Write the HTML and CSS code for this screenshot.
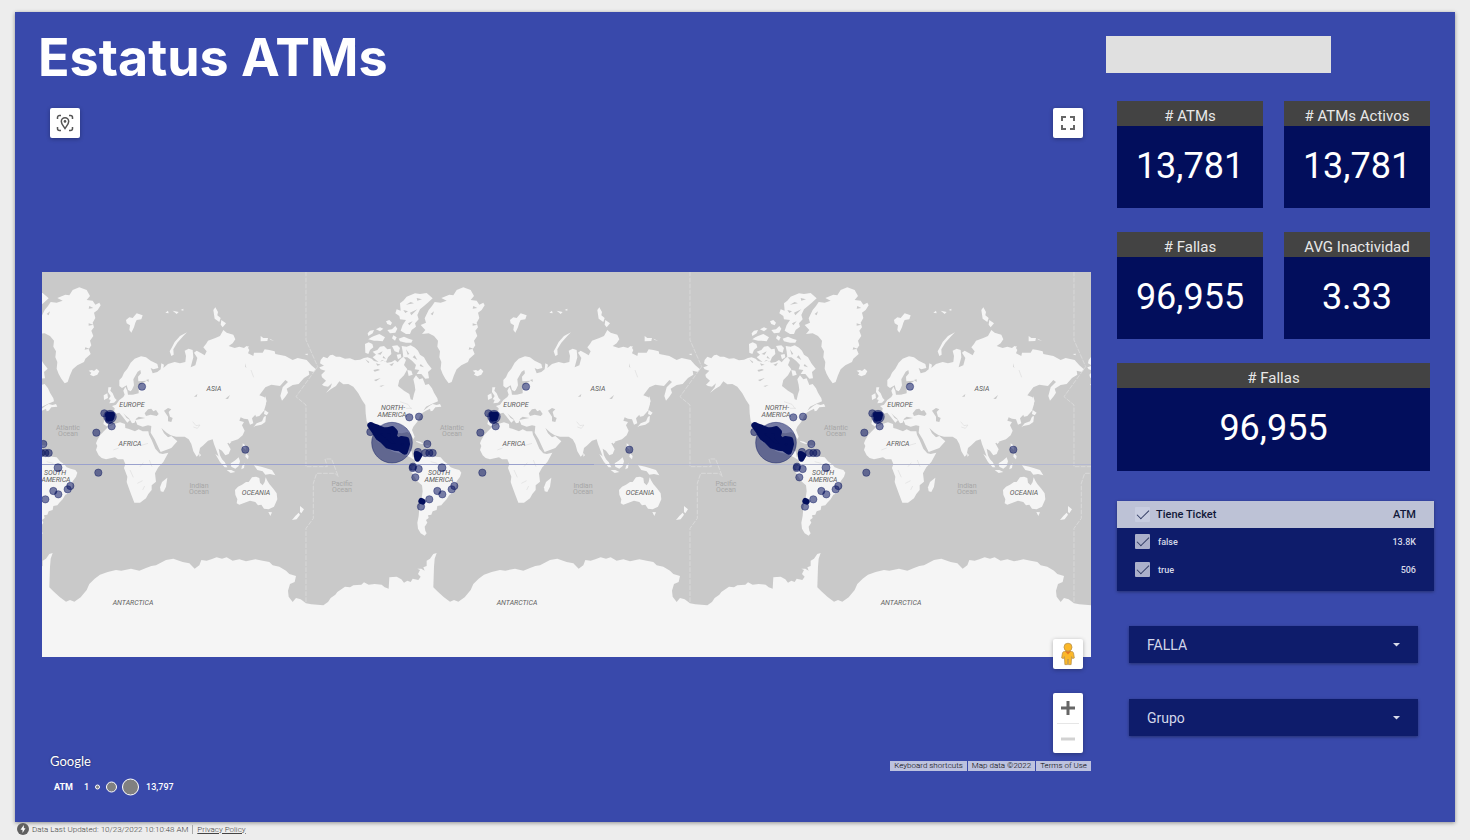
FILE: index.html
```html
<!DOCTYPE html>
<html lang="es">
<head>
<meta charset="utf-8">
<meta name="viewport" content="width=device-width, initial-scale=1">
<title>Estatus ATMs</title>
<link rel="stylesheet" href="styles.css">
</head>
<body>
<main class="report">
  <header class="report-head">
    <h1>Estatus ATMs</h1>
    <div class="placeholder"></div>
  </header>

  <div class="report-body">
    <section class="map-column">
      <div class="map">
        <svg class="world" viewBox="42 272 1049 385" role="img" aria-label="ATM map">
          <defs>
            <g id="land">
              <g class="land">
                <path d="M62 270L70 260L82 265L90 256L98 254L108 260L120 260L135 266L150 265L165 271L180 269L192 264L203 262L215 266L222 273L235 276L250 272L262 278L275 276L285 270L293 277L302 266L310 260L318 270L312 285L322 298L312 316L298 330L294 348L312 362L328 372L332 388L338 390L342 372L346 360L344 345L340 328L348 316L358 328L368 325L376 345L386 342L396 355L402 368L412 385L414 394L395 402L378 410L370 422L388 408L398 402L410 405L420 402L424 410L406 412L398 422L392 424L390 416L378 422L368 428L360 438L352 455L340 470L336 480L344 500L340 508L332 492L322 486L305 490L290 488L278 498L276 520L288 535L302 532L312 520L322 524L318 540L335 544L338 560L350 566L346 572L330 562L308 552L280 545L258 532L244 512L228 490L222 484L232 508L238 520L226 506L214 478L200 454L197 430L196 405L186 390L175 370L160 350L145 342L130 343L118 334L108 348L92 358L78 369L92 352L96 340L84 350L72 348L66 344L78 332L66 322L64 314L76 302L62 298L58 292L72 287L60 280Z"/>
                <path d="M300 100L310 92L320 80L345 70L360 72L380 69L398 85L385 97L372 108L360 118L352 135L356 148L345 160L348 170L335 180L330 192L318 192L302 182L308 165L318 150L300 148L298 138L286 130L290 118L302 122Z"/>
                <path d="M305 228L320 230L332 226L345 233L354 242L360 254L372 262L382 280L395 296L384 306L387 325L376 326L364 312L350 312L358 300L344 298L348 285L336 272L322 262L310 262L308 245Z"/>
                <path d="M218 245L232 240L240 230L252 228L262 238L272 236L274 252L264 262L258 276L246 270L238 278L228 270L218 262L228 254Z"/>
                <path d="M195 222L206 217L217 222L220 232L210 240L205 252L196 248Z"/>
                <path d="M222 198L238 192L255 202L248 214L232 212L222 212L205 208L214 202Z"/>
                <path d="M203 190L210 182L222 180L218 190L205 198Z"/>
                <path d="M228 178L240 172L250 176L240 184Z"/>
                <path d="M258 154L268 150L276 158L272 166L262 162Z"/>
                <path d="M262 180L276 178L286 168L292 176L286 188L270 190Z"/>
                <path d="M280 196L290 202L285 212L276 205Z"/>
                <path d="M296 206L312 200L326 206L338 210L334 218L318 218L300 214Z"/>
                <path d="M276 228L292 226L300 234L296 248L284 244Z"/>
                <path d="M290 254L302 252L304 262L294 268Z"/>
                <path d="M322 300L334 302L338 314L326 318Z"/>
                <path d="M362 165L378 158L374 145L386 120L396 108L404 96L422 98L440 92L424 84L448 74L460 76L470 60L490 52L512 60L522 78L512 90L530 92L538 104L550 98L554 106L545 120L534 128L538 144L530 158L534 172L526 182L532 198L522 212L526 226L518 238L524 252L508 266L504 276L484 286L470 298L462 316L455 336L446 340L436 326L428 312L422 296L424 276L418 262L420 244L412 230L414 212L402 198L386 190L366 192L376 180Z"/>
                <path d="M518 302L528 300L534 303L542 296L550 304L544 314L532 319L522 314L526 308Z"/>
                <path d="M347 512L360 515L372 522L362 521L350 516Z"/>
                <path d="M376 526L392 527L390 532L378 531Z"/>
                <path d="M344 568L358 558L366 552L374 556L396 556L408 560L422 562L432 574L446 584L452 592L464 596L478 600L484 608L480 620L470 634L468 652L462 668L448 674L440 688L430 698L424 706L412 708L410 720L398 724L394 734L384 736L386 744L378 750L382 758L374 770L376 782L380 790L374 797L362 790L354 776L352 758L356 738L358 714L364 690L368 664L366 646L352 634L342 618L334 606L338 590L346 582Z"/>
                <path d="M577 470L562 485L552 496L544 510L540 520L544 528L540 540L548 556L557 564L570 568L597 562L606 568L622 568L628 582L624 594L634 620L632 636L637 650L645 672L655 698L672 698L690 685L697 672L707 660L707 646L720 635L717 610L727 592L742 576L757 548L740 552L730 550L718 536L707 510L699 494L697 484L680 484L668 478L657 484L637 476L628 474L627 462L612 457L597 461Z"/>
                <path d="M754 623L750 650L742 666L734 664L732 652L738 636Z"/>
                <path d="M577 352L586 352L583 362L590 370L596 384L602 390L594 398L580 400L584 390L578 388L584 378L576 366Z"/>
                <path d="M563 376L574 370L576 384L564 390Z"/>
                <g transform="translate(600 0)">
                  <path d="M-34 430L-22 427L-6 428L-4 415L-12 408L0 404L10 390L22 381L26 374L22 362L28 350L34 362L36 374L48 374L58 370L50 358L44 364L36 360L32 346L18 354L10 348L10 330L18 322L24 308L34 296L44 278L56 266L75 259L90 262L104 272L124 282L127 294L112 298L104 294L110 310L124 306L134 298L136 280L144 284L142 294L156 282L176 276L192 280L208 276L210 258L206 242L218 236L230 240L232 262L224 292L238 286L244 264L234 248L242 242L256 250L266 256L272 244L262 232L270 222L276 212L298 204L312 198L322 180L332 188L352 194L358 208L350 220L338 228L356 234L370 230L384 234L392 228L400 240L396 250L412 258L414 248L440 248L446 238L460 240L476 244L478 252L508 258L530 270L545 264L572 270L586 286L600 298L594 306L578 302L580 314L564 324L548 342L530 345L512 356L516 368L508 380L498 392L493 378L500 352L516 336L508 330L492 348L466 344L448 352L430 376L446 382L450 402L444 422L430 438L420 440L418 434L408 445L412 460L402 464L396 448L384 446L374 442L370 452L384 456L378 466L386 482L380 496L366 508L348 514L334 520L344 538L338 552L328 556L318 542L308 536L312 556L322 576L328 582L312 572L304 548L294 522L290 508L276 512L262 526L252 534L248 554L242 560L232 544L226 522L218 508L206 500L180 500L164 496L152 488L136 474L144 490L156 502L166 498L184 514L166 534L134 546L128 534L116 508L104 488L106 468L96 466L80 470L64 464L58 450L76 446L88 444L68 440L60 446L56 458L48 460L40 446L28 436L22 430L32 444L42 450L34 458L20 440L10 428L-6 432L-10 446L-14 464L-26 470L-38 462L-34 446Z"/>
                  <path d="M30 150L40 142L50 144L62 130L80 136L76 148L62 150L58 158L54 172L46 188L40 180L42 166L32 160Z"/>
                  <path d="M213 187L192 198L176 216L168 232L161 244L166 258L173 254L172 238L184 218L202 198Z"/>
                  <path d="M148 128L156 122L158 130ZM170 122L188 126L182 132ZM194 120L202 116L202 122Z"/>
                  <path d="M292 120L298 112L306 126L304 136L314 144L310 156L296 146ZM316 150L330 160L320 172L314 164Z"/>
                  <path d="M434 198L442 204L456 204L454 213L434 214ZM460 206L474 212L464 210Z"/>
                  <path d="M566 252L576 251L574 256ZM386 232L398 228L396 236Z"/>
                  <path d="M448 378L452 394L448 404L446 390ZM446 420L458 428L452 436L444 432ZM450 438L448 456L436 464L418 468L412 472L422 460L438 454L444 440Z"/>
                  <path d="M250 548L255 556L250 560ZM298 552L312 562L326 576L334 592L326 592L312 576ZM332 600L346 600L358 606L344 609ZM344 580L356 572L368 562L372 574L368 588L358 596L346 590ZM378 588L386 580L384 594L376 598Z"/>
                  <path d="M380 520L388 526L390 540L380 532ZM390 550L398 558L396 568L388 560Z"/>
                  <path d="M414 586L426 588L436 590L456 596L468 600L478 616L462 612L448 614L440 604L424 600ZM335 514L346 516L340 522Z"/>
                  <path d="M357 660L366 650L378 644L390 636L398 636L408 622L420 620L430 624L432 638L440 646L446 636L449 622L454 632L460 642L472 656L482 670L484 688L474 710L458 718L444 716L436 704L426 706L418 696L402 692L386 698L370 704L362 700L364 688L358 674Z"/>
                  <path d="M457 726L468 727L463 738ZM528 750L538 738L548 728L552 734L542 748ZM552 708L564 718L556 730L552 726Z"/>
                </g>
                <path d="M18 1000L34 1003L70 1006L84 996L92 984L106 974L112 966L135 950L150 952L160 946L184 944L192 937L206 944L224 942L245 944L254 952L266 956L268 922L290 920L304 928L312 938L322 932L332 936L338 926L355 930L362 920L354 912L360 900L352 896L364 896L374 902L370 892L380 888L380 872L390 866L400 852L410 849L404 866L402 890L400 952L412 964L430 980L450 995L462 990L475 995L494 982L512 960L520 942L536 926L552 914L575 906L600 900L616 902L645 896L670 902L690 894L706 888L720 886L750 870L772 866L800 876L820 880L836 896L850 886L856 870L872 872L886 868L902 862L918 866L932 862L950 872L970 868L990 874L1018 868L1040 872L1060 876L1070 886L1090 890L1110 902L1120 912L1140 918L1136 936L1122 942L1116 962L1118 980L1130 996L1140 984L1154 988L1170 1000V1166H18Z"/>
              </g>
              <g class="water">
                <path d="M665 305L673 300L675 310L666 320L667 334L692 332L680 340L668 346L668 370L650 374L646 364L654 346L652 328Z"/>
                <path d="M686 430L696 418L706 416L712 424L720 420L728 432L722 438L704 434L690 438Z"/>
                <path d="M744 422L756 414L766 418L758 426L762 440L770 444L766 456L756 454L756 440Z"/>
                <path d="M220 300l14 -3l6 3l-16 5zM222 330l20-6l-14 10zM238 348l16-3l-10 5zM690 330l8-2v8zM806 500l14 8zM834 380l10-8l-2 8zM928 386l14-11l-6 12zM988 280l3 14l-3-4z"/>
                <path d="M318 104l14-8l10 4l-16 3zM330 128l22-10l-18 18zM310 120l14 4l-8 5zM324 160l14-6l-10 12zM350 84l16 4l-14 4zM318 238l10 14l-5 2zM344 256l8 14l-14-8zM362 282l10 10l-13-4zM232 252l16-8l-6 10zM250 258l8 8l-10-2zM196 268l12 8l-3 3zM228 280l14 4l-10 3zM268 284l14-6l-6 10zM392 132l10-8l-4 12zM520 108l12 6l-14 2zM518 160l14 4l-14 3zM508 232l12 4l-14 3z"/>
              </g>
              <path class="fissure" d="M642 600l10 22M672 590l10-12M700 570l8 20M664 640l16-8M680 660l6-12M696 520l-20 6M592 540l16-6M830 455l10 12l12-2l-8 10l-12-4M1005 300l8 22M300 395l24 8l10 14M318 415h18M405 600l14 16M392 575l20 5"/>
              <path class="dateline" d="M18 5V210L53 290L-12 380L18 405V590H82L75 567H95L115 620L105 610H50L40 640V745L18 775V1000"/>
            </g>
            <g id="sites">
              <circle class="site" cx="276" cy="518" r="61"/>
              <path class="dense" d="M212 466L220 470L232 474L250 482L262 482L276 478L284 486L280 500L296 516L304 508L318 510L320 522L314 544L300 534L284 532L264 526L248 510L236 502L224 482Z"/>
              <g class="site">
                <circle cx="211" cy="486" r="11"/><circle cx="328" cy="442" r="11"/><circle cx="357" cy="440" r="11"/>
                <circle cx="382" cy="522" r="11"/><circle cx="398" cy="549" r="11"/><circle cx="388" cy="549" r="11"/>
                <circle cx="376" cy="549" r="11"/><circle cx="354" cy="546" r="11"/><circle cx="339" cy="590" r="11"/><circle cx="338" cy="594" r="11"/>
                <circle cx="356" cy="597" r="11"/><circle cx="346" cy="622" r="11"/><circle cx="426" cy="593" r="12"/>
                <circle cx="547" cy="608" r="11"/><circle cx="463" cy="648" r="11"/><circle cx="455" cy="658" r="11"/>
                <circle cx="412" cy="663" r="11"/><circle cx="427" cy="673" r="11"/><circle cx="388" cy="688" r="11"/>
                <circle cx="363" cy="710" r="11"/><circle cx="565" cy="430" r="11"/><circle cx="587" cy="469" r="11"/>
                <circle cx="541" cy="488" r="11"/><circle cx="678" cy="350" r="11"/><circle cx="988" cy="539" r="11"/>
                <circle cx="582" cy="440" r="19"/><circle cx="579" cy="450" r="11"/>
              </g>
              <path class="dense small" d="M350 552L358 556L352 566ZM364 693L368 695ZM576 434L588 434L586 444L578 446Z"/>
            </g>
          </defs>
          <rect class="ocean" x="42" y="272" width="1049" height="385"/>
          <g transform="translate(300 270) scale(.33333)">
            <use href="#land" x="-1152"/><use href="#land"/><use href="#land" x="1152"/><use href="#land" x="2304"/>
          </g>
          <path class="equator" d="M42 464.500H594"/>
          <path class="equator faint" d="M594 464.500H1091"/>
          <g class="labels">
            <g transform="translate(-384 0)">
              <text x="598" y="391">ASIA</text><text x="516" y="407">EUROPE</text><text x="514" y="446">AFRICA</text>
              <text x="439" y="475">SOUTH</text><text x="440" y="482">AMERICA</text><text x="640" y="495">OCEANIA</text><text x="517" y="605">ANTARCTICA</text>
              <text class="sea" x="452" y="430">Atlantic</text><text class="sea" x="452" y="436">Ocean</text>
              <text class="sea" x="583" y="488">Indian</text><text class="sea" x="583" y="494">Ocean</text>
            </g>
            <g>
              <text x="393" y="410">NORTH-</text><text x="392" y="417">AMERICA</text>
              <text x="598" y="391">ASIA</text><text x="516" y="407">EUROPE</text><text x="514" y="446">AFRICA</text>
              <text x="439" y="475">SOUTH</text><text x="439" y="482">AMERICA</text><text x="640" y="495">OCEANIA</text><text x="517" y="605">ANTARCTICA</text>
              <text class="sea" x="452" y="430">Atlantic</text><text class="sea" x="452" y="436">Ocean</text>
              <text class="sea" x="342" y="486">Pacific</text><text class="sea" x="342" y="492">Ocean</text>
              <text class="sea" x="583" y="488">Indian</text><text class="sea" x="583" y="494">Ocean</text>
            </g>
            <g transform="translate(384 0)">
              <text x="393" y="410">NORTH-</text><text x="392" y="417">AMERICA</text>
              <text x="598" y="391">ASIA</text><text x="516" y="407">EUROPE</text><text x="514" y="446">AFRICA</text>
              <text x="439" y="475">SOUTH</text><text x="439" y="482">AMERICA</text><text x="640" y="495">OCEANIA</text><text x="517" y="605">ANTARCTICA</text>
              <text class="sea" x="452" y="430">Atlantic</text><text class="sea" x="452" y="436">Ocean</text>
              <text class="sea" x="342" y="486">Pacific</text><text class="sea" x="342" y="492">Ocean</text>
              <text class="sea" x="583" y="488">Indian</text><text class="sea" x="583" y="494">Ocean</text>
            </g>
          </g>
          <g transform="translate(300 270) scale(.33333)">
            <use href="#sites" x="-1152"/><use href="#sites"/><use href="#sites" x="1152"/>
          </g>
        </svg>

        <button class="map-btn recenter" type="button" aria-label="Recenter map">
          <svg width="18" height="18" viewBox="0 0 18 18" fill="none" stroke="#555" stroke-width="1.500">
            <path d="M1.500 5V3.500a2 2 0 0 1 2-2H5M13 1.500h1.500a2 2 0 0 1 2 2V5M16.500 13v1.500a2 2 0 0 1-2 2H13M5 16.500H3.500a2 2 0 0 1-2-2V13"/>
            <path d="M9 14.500C7 11.500 5.300 9.800 5.300 7.500a3.700 3.700 0 0 1 7.400 0C12.700 9.800 11 11.500 9 14.500z"/><circle cx="9" cy="7.400" r="1.300" fill="#555" stroke="none"/>
          </svg>
        </button>
        <button class="map-btn fullscreen" type="button" aria-label="Toggle fullscreen view">
          <svg width="14" height="14" viewBox="0 0 14 14" fill="none" stroke="#666" stroke-width="2"><path d="M0 1H5M1 0V5M9 1H14M13 0V5M0 13H5M1 14V9M9 13H14M13 14V9"/></svg>
        </button>
        <div class="map-tools">
          <button class="map-btn" type="button" aria-label="Street View">
            <svg width="14" height="24" viewBox="0 0 14 24">
              <path d="M3.500 9.500h7c1.500 0 2 1 2.200 2.500l.6 4-1.800.6-.9-2-.5 8H7.400L7 17l-.5 5.600H3.900l-.5-8-.9 2-1.800-.6.600-4C1.500 10.500 2 9.500 3.500 9.500z" fill="#fbb829" stroke="#b9924a" stroke-width=".8"/>
              <path d="M4 9.200h6L7 12.500z" fill="#e67621"/><circle cx="7" cy="5.200" r="4" fill="#fbb829" stroke="#b9924a" stroke-width=".8"/>
            </svg>
          </button>
          <div class="zoom">
            <button type="button" aria-label="Zoom in"><svg width="14" height="14" viewBox="0 0 14 14" stroke="#666" stroke-width="3"><path d="M0 7H14M7 0V14"/></svg></button>
            <button type="button" aria-label="Zoom out" disabled><svg width="14" height="14" viewBox="0 0 14 14" stroke="#d2d2d2" stroke-width="3"><path d="M0 7H14"/></svg></button>
          </div>
        </div>
        <span class="google">Google</span>
        <div class="attribution">
          <button type="button">Keyboard shortcuts</button><span>Map data ©2022</span><a href="#terms">Terms of Use</a>
        </div>
      </div>
      <div class="legend">
        <b>ATM</b><span>1</span>
        <svg width="44" height="18" viewBox="0 0 44 18" fill="#808080" stroke="#fff" aria-hidden="true"><circle cx="2.500" cy="9" r="2"/><circle cx="16.500" cy="9" r="5"/><circle cx="35.500" cy="9" r="8"/></svg>
        <span>13,797</span>
      </div>
    </section>

    <aside class="side">
      <div class="cards">
        <section class="card"><h2>#&nbsp;ATMs</h2><p>13,781</p></section>
        <section class="card"><h2>#&nbsp;ATMs Activos</h2><p>13,781</p></section>
        <section class="card"><h2># Fallas</h2><p>96,955</p></section>
        <section class="card"><h2>AVG Inactividad</h2><p>3.33</p></section>
        <section class="card wide"><h2># Fallas</h2><p>96,955</p></section>
      </div>

      <div class="ticket-box">
        <table class="tickets">
          <thead><tr><th class="tick"><input id="t-all" type="checkbox" checked></th><th><label for="t-all">Tiene Ticket</label></th><th class="num">ATM</th></tr></thead>
          <tbody>
            <tr><td class="tick"><input id="t-false" type="checkbox" checked></td><td><label for="t-false">false</label></td><td class="num">13.8K</td></tr>
            <tr><td class="tick"><input id="t-true" type="checkbox" checked></td><td><label for="t-true">true</label></td><td class="num">506</td></tr>
          </tbody>
        </table>
      </div>

      <div class="filters">
        <div class="filter">
          <select aria-label="FALLA"><option>FALLA</option></select>
          <svg width="7" height="4" viewBox="0 0 7 4" aria-hidden="true"><path d="M0 0H7L3.500 3.500z" fill="#d8dbea"/></svg>
        </div>
        <div class="filter">
          <select aria-label="Grupo"><option>Grupo</option></select>
          <svg width="7" height="4" viewBox="0 0 7 4" aria-hidden="true"><path d="M0 0H7L3.500 3.500z" fill="#d8dbea"/></svg>
        </div>
      </div>
    </aside>
  </div>
</main>
<footer class="foot">
  <svg width="12" height="12" viewBox="0 0 12 12" aria-hidden="true"><circle cx="6" cy="6" r="6" fill="#606060"/><path d="M6.800 2L3.500 6.700H5.500V10L8.500 5.300H6.800z" fill="#fff"/></svg>
  <span>Data Last Updated: 10/23/2022 10:10:48 AM</span>
  <a href="#privacy">Privacy Policy</a>
</footer>
</body>
</html>
```

FILE: styles.css
```css
* {
  box-sizing: border-box;
}

body {
  margin: 0;
  padding: 12px 15px 0;
  background: #ededed;
  font-family: Roboto, "Liberation Sans", sans-serif;
}

button,
select {
  font: inherit;
  border: 0;
  padding: 0;
  cursor: pointer;
}

h1,
h2,
p {
  margin: 0;
  font-weight: 400;
}

.report {
  padding: 0 21px 23px 27px;
  background: #3949ab;
  box-shadow: 0 1px 4px rgba(0, 0, 0, .4);
}

.report-head {
  display: flex;
  justify-content: space-between;
  align-items: flex-start;
  height: 86px;
  padding: 14px 103px 0 0;
}

.report-head h1 {
  margin-left: -4px;
  color: #fff;
  font-family: Inter, "Liberation Sans", sans-serif;
  font-size: 52px;
  font-weight: 700;
  line-height: 64px;
}

.placeholder {
  width: 225px;
  height: 37px;
  margin-top: 10px;
  background: #e0e0e0;
}

.report-body {
  display: grid;
  grid-template-columns: minmax(0, 1fr) 317px;
  gap: 26px;
}

/* Map */

.map {
  position: relative;
  padding: 174px 0 114px;
}

.world {
  display: block;
  width: 100%;
  height: auto;
}

.ocean,
.water {
  fill: #c9c9c9;
}

.land {
  fill: #f5f5f5;
}

.fissure {
  fill: none;
  stroke: #dedede;
  stroke-width: 2;
}

.dateline {
  fill: none;
  stroke: #d9d9d9;
  stroke-width: 3;
  stroke-dasharray: 14 4;
}

.equator {
  stroke: #9aa1cd;
  stroke-width: 1;
}

.equator.faint {
  stroke: #b4b8d0;
}

.labels {
  font-size: 7px;
  font-style: italic;
  text-anchor: middle;
  fill: #5e5e5e;
}

.labels .sea {
  font-style: normal;
  fill: #a6a6a6;
}

.site {
  fill: rgba(2, 14, 92, .52);
  stroke: rgba(2, 14, 92, .6);
  stroke-width: 2;
}

.dense {
  fill: #020e5c;
  stroke: #020e5c;
  stroke-width: 20;
  stroke-linejoin: round;
  stroke-linecap: round;
}

.dense.small {
  stroke-width: 18;
}

.map-btn {
  display: grid;
  place-items: center;
  width: 30px;
  height: 30px;
  background: #fff;
  border-radius: 2px;
  box-shadow: 0 1px 4px rgba(0, 0, 0, .3);
}

.recenter,
.fullscreen {
  position: absolute;
  top: 10px;
  left: 8px;
}

.fullscreen {
  left: auto;
  right: 8px;
}

.map-tools {
  position: absolute;
  right: 8px;
  bottom: 18px;
  display: grid;
  gap: 24px;
}

.zoom {
  width: 30px;
  background: #fff;
  border-radius: 2px;
  box-shadow: 0 1px 4px rgba(0, 0, 0, .3);
}

.zoom button {
  display: grid;
  place-items: center;
  width: 22px;
  height: 30px;
  margin: 0 auto;
  background: none;
}

.zoom button + button {
  border-top: 1px solid #e6e6e6;
}

.google {
  position: absolute;
  left: 8px;
  bottom: 2px;
  color: #fff;
  font-family: Lato, sans-serif;
  font-size: 13px;
  line-height: 16px;
  text-shadow: 0 0 2px rgba(0, 0, 0, .5);
}

.attribution {
  position: absolute;
  right: 0;
  bottom: 0;
  display: flex;
  gap: 1px;
  font-weight: 300;
  font-size: 8px;
  line-height: 10px;
}

.attribution > * {
  padding: 0 4px;
  background: #bdc2df;
  color: #000;
  text-decoration: none;
}

.legend {
  display: flex;
  align-items: center;
  height: 25px;
  margin-top: 3px;
  padding-left: 12px;
  color: #fff;
  font-size: 9px;
  font-weight: 500;
}

.legend b {
  margin-right: 11px;
}

.legend svg {
  margin: 0 7px 0 6px;
}

/* Side column */

.side {
  padding-top: 3px;
}

.cards {
  display: grid;
  grid-template-columns: 1fr 1fr;
  gap: 24px 21px;
  margin-right: 4px;
}

.card {
  background: #020e5c;
  color: #fff;
  text-align: center;
}

.card h2 {
  padding-top: 5px;
  background: #434343;
  color: #e8e8e8;
  font-size: 15px;
  line-height: 20px;
}

.card p {
  padding: 18px 0 20px;
  font-size: 36px;
  line-height: 44px;
}

.wide {
  grid-column: 1 / -1;
  padding-bottom: 1px;
}

.ticket-box {
  margin-top: 30px;
  padding-bottom: 7px;
  background: #0e1c6b;
  box-shadow: 0 1px 3px rgba(0, 0, 0, .35);
}

.tickets {
  width: 100%;
  border-collapse: collapse;
  color: #d6d9e8;
  font-size: 9px;
  font-weight: 500;
  text-align: left;
}

.tickets th {
  height: 27px;
  padding: 0;
  background: #bdc2d6;
  color: #111839;
  font-size: 11px;
  font-weight: 500;
}

.tickets td {
  height: 28px;
  padding: 0 0 1px 2px;
}

.tickets .tick {
  width: 39px;
  padding: 0 6px 1px 18px;
}

.tickets .num {
  padding-right: 18px;
  text-align: right;
}

.tick input {
  appearance: none;
  display: grid;
  place-items: center;
  width: 15px;
  height: 15px;
  margin: 0;
  border-radius: 1px;
  background: #abb0ca;
}

.tick input::after {
  content: "";
  width: 11px;
  height: 5px;
  margin-bottom: 3px;
  border: solid #303a62;
  border-width: 0 0 1px 1px;
  transform: rotate(-45deg);
}

th.tick input {
  background: #c8cde0;
}

.filters {
  display: grid;
  gap: 36px;
  margin: 35px 16px 0 12px;
}

.filter {
  position: relative;
}

.filter select {
  appearance: none;
  width: 100%;
  height: 37px;
  padding: 0 18px;
  border-radius: 0;
  background: #0e1c6b;
  box-shadow: 0 1px 3px rgba(0, 0, 0, .35);
  color: #d3d7ea;
  font-size: 14px;
}

.filter svg {
  position: absolute;
  top: 17px;
  right: 18px;
  pointer-events: none;
}

/* Footer */

.foot {
  display: flex;
  align-items: center;
  height: 14px;
  padding-left: 2px;
  color: #444;
  font-weight: 300;
  font-size: 8px;
}

.foot span {
  margin-left: 3px;
  padding-right: 4px;
  border-right: 1px solid #aaa;
}

.foot a {
  margin-left: 4px;
  color: #444;
}
```
